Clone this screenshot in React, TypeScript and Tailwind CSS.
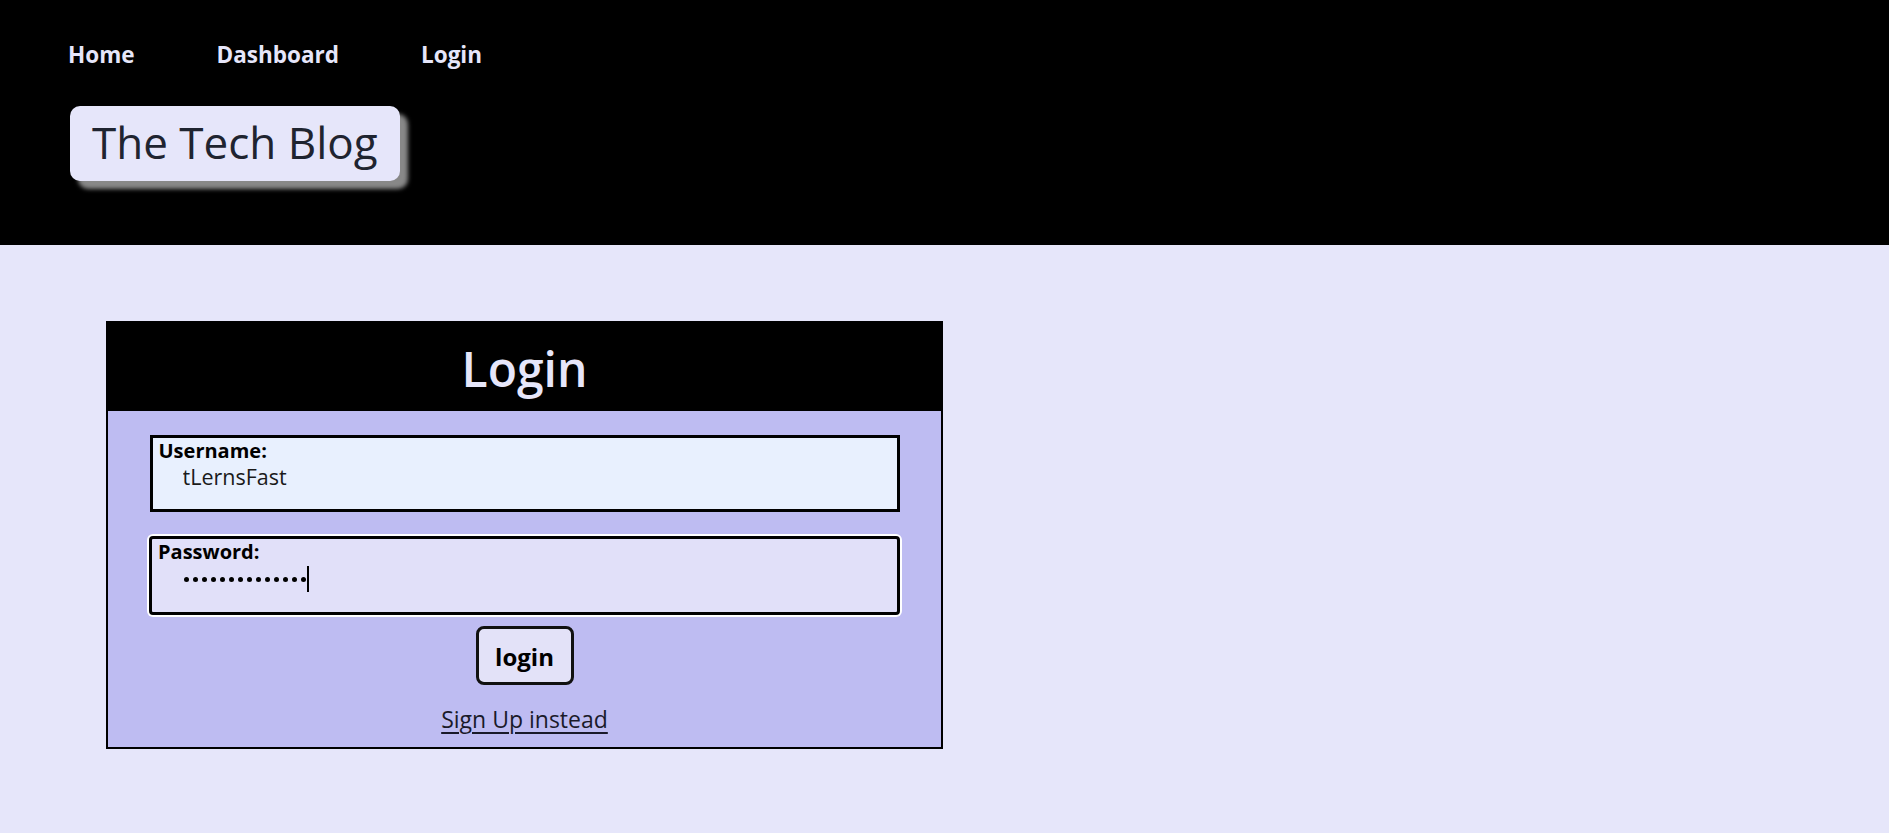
import React from "react";

const navLinks = ["Home", "Dashboard", "Login"];

export default function App() {
  return (
    <div className="min-h-[833px] w-full bg-[#e6e6fa] font-['Open_Sans','Noto_Sans',sans-serif]">
      {/* header */}
      <header className="h-[245px] bg-black px-[70px]">
        <nav className="flex gap-[84px] pt-[38px]">
          {navLinks.map((l) => (
            <a key={l} href="#" className="-ml-[2px] text-[22.5px] font-bold leading-[34px] text-[#e6e6fa]">
              {l}
            </a>
          ))}
        </nav>
        <div className="mt-[34px] inline-block rounded-[10px] bg-[#e6e6fa] px-[22px] pt-[4px] pb-[6px] shadow-[8px_8px_4px_#888888]">
          <h1 className="text-[44px] font-medium leading-[65px] text-[#1f2430]">The Tech Blog</h1>
        </div>
      </header>

      {/* main */}
      <main className="pt-[76px] pl-[106px]">
        <section className="w-[837px] border-2 border-black bg-[#bebcf2]">
          <div className="flex h-[88px] items-center justify-center bg-black pt-[3px]">
            <h2 className="text-[48px] font-semibold leading-none text-[#e6e6fa]">Login</h2>
          </div>
          <form className="flex flex-col items-center pt-[24px] pb-[12px]">
            <div className="h-[77px] w-[750px] border-[3px] border-black bg-[#e8f0fe] px-[6px] pt-[1px]">
              <label className="block text-[20px] font-bold leading-[24px] text-black">Username:</label>
              <input
                readOnly
                defaultValue="tLernsFast"
                className="ml-[24px] block w-[600px] bg-transparent text-[21.5px] leading-[28px] text-[#1a1a1a] outline-none"
              />
            </div>
            <div className="mt-[24px] h-[79px] w-[751px] rounded-[4px] border-[3px] border-black bg-[#e1e0f9] px-[6px] pt-[1px] shadow-[0_0_0_2px_#ffffff]">
              <label className="block text-[20px] font-bold leading-[24px] text-black">Password:</label>
              <div className="ml-[26px] flex h-[30px] items-center gap-[4px]">
                {Array.from({ length: 14 }).map((_, i) => (
                  <span key={i} className="h-[5px] w-[5px] rounded-full bg-black" />
                ))}
                <span className="-ml-[3px] h-[26px] w-[2px] bg-black" />
              </div>
            </div>
            <button
              type="button"
              className="mt-[11px] h-[59px] w-[98px] rounded-[8px] border-[3px] border-[#111] bg-[#e3e2f8] pt-[2px] text-[24px] font-bold text-black"
            >
              login
            </button>
            <a href="#" className="mt-[18px] text-[23px] leading-[32px] text-[#1a1a2a] underline underline-offset-[4px]">
              Sign Up instead
            </a>
          </form>
        </section>
      </main>
    </div>
  );
}
